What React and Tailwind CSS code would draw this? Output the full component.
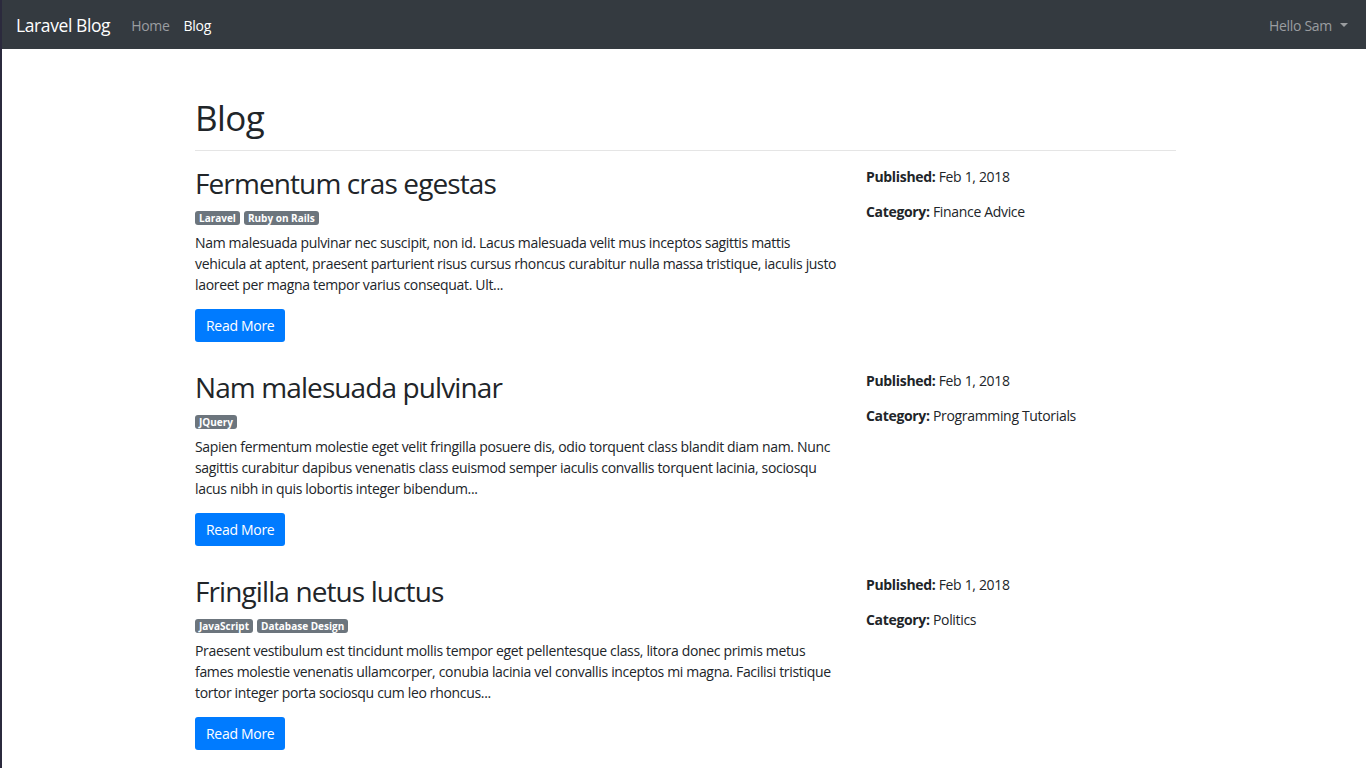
import React from "react";

const posts = [
  {
    title: "Fermentum cras egestas",
    tags: ["Laravel", "Ruby on Rails"],
    body: "Nam malesuada pulvinar nec suscipit, non id. Lacus malesuada velit mus inceptos sagittis mattis vehicula at aptent, praesent parturient risus cursus rhoncus curabitur nulla massa tristique, iaculis justo laoreet per magna tempor varius consequat. Ult...",
    category: "Finance Advice",
  },
  {
    title: "Nam malesuada pulvinar",
    tags: ["JQuery"],
    body: "Sapien fermentum molestie eget velit fringilla posuere dis, odio torquent class blandit diam nam. Nunc sagittis curabitur dapibus venenatis class euismod semper iaculis convallis torquent lacinia, sociosqu lacus nibh in quis lobortis integer bibendum...",
    category: "Programming Tutorials",
  },
  {
    title: "Fringilla netus luctus",
    tags: ["JavaScript", "Database Design"],
    body: "Praesent vestibulum est tincidunt mollis tempor eget pellentesque class, litora donec primis metus fames molestie venenatis ullamcorper, conubia lacinia vel convallis inceptos mi magna. Facilisi tristique tortor integer porta sociosqu cum leo rhoncus...",
    category: "Politics",
  },
];

const App = () => {
  return (
    <div
      className="min-h-[768px] bg-white text-[#212529] border-l-2 border-[#2b2a3d]"
      style={{ fontFamily: '"Open Sans", "Noto Sans", sans-serif' }}
    >
      <nav className="h-[49px] bg-[#343a40] flex items-center justify-between pl-[14px] pr-[18px] tracking-[-0.3px]">
        <div className="flex items-center pt-[1px]">
          <span className="text-[17.5px] text-white mr-[21px] tracking-[-0.4px]">Laravel Blog</span>
          <span className="text-[14px] text-[#9a9da0] mr-[14px]">Home</span>
          <span className="text-[14px] text-white">Blog</span>
        </div>
        <div className="flex items-center text-[14px] text-[#9a9da0] pt-[1px]">
          <span>Hello Sam</span>
          <span className="ml-[8px] w-0 h-0 border-l-[4px] border-r-[4px] border-t-[4px] border-l-transparent border-r-transparent border-t-[#9a9da0]"></span>
        </div>
      </nav>

      <div className="w-[981px] ml-[193px] pt-[48px]">
        <h1 className="text-[35px] leading-[42px] tracking-[-0.6px]">Blog</h1>
        <hr className="mt-[11px] mb-[16px] border-t border-[#e5e5e5]" />

        {posts.map((post, index) => (
          <div key={index} className="flex gap-[26px] mb-[29px]">
            <div className="w-[645px]">
              <h2 className="text-[28px] leading-[33px] tracking-[-0.9px]">{post.title}</h2>
              <div className="flex gap-[4px] mt-[11px] mb-[7px]">
                {post.tags.map((tag) => (
                  <span
                    key={tag}
                    className="bg-[#6c757d] text-white text-[10px] font-bold leading-[14px] px-[4px] rounded-[3px]"
                  >
                    {tag}
                  </span>
                ))}
              </div>
              <p className="text-[14px] leading-[21px] tracking-[-0.33px]">{post.body}</p>
              <button className="mt-[14px] bg-[#007bff] text-white text-[14px] leading-[21px] px-[11px] py-[6px] rounded-[3px] tracking-[-0.3px]">
                Read More
              </button>
            </div>
            <div className="w-[310px] text-[14px] leading-[21px] tracking-[-0.33px]">
              <p className="mb-[14px] -mt-[1px]">
                <span className="font-bold">Published:</span> Feb 1, 2018
              </p>
              <p>
                <span className="font-bold">Category:</span> {post.category}
              </p>
            </div>
          </div>
        ))}
      </div>
    </div>
  );
};

export default App;
